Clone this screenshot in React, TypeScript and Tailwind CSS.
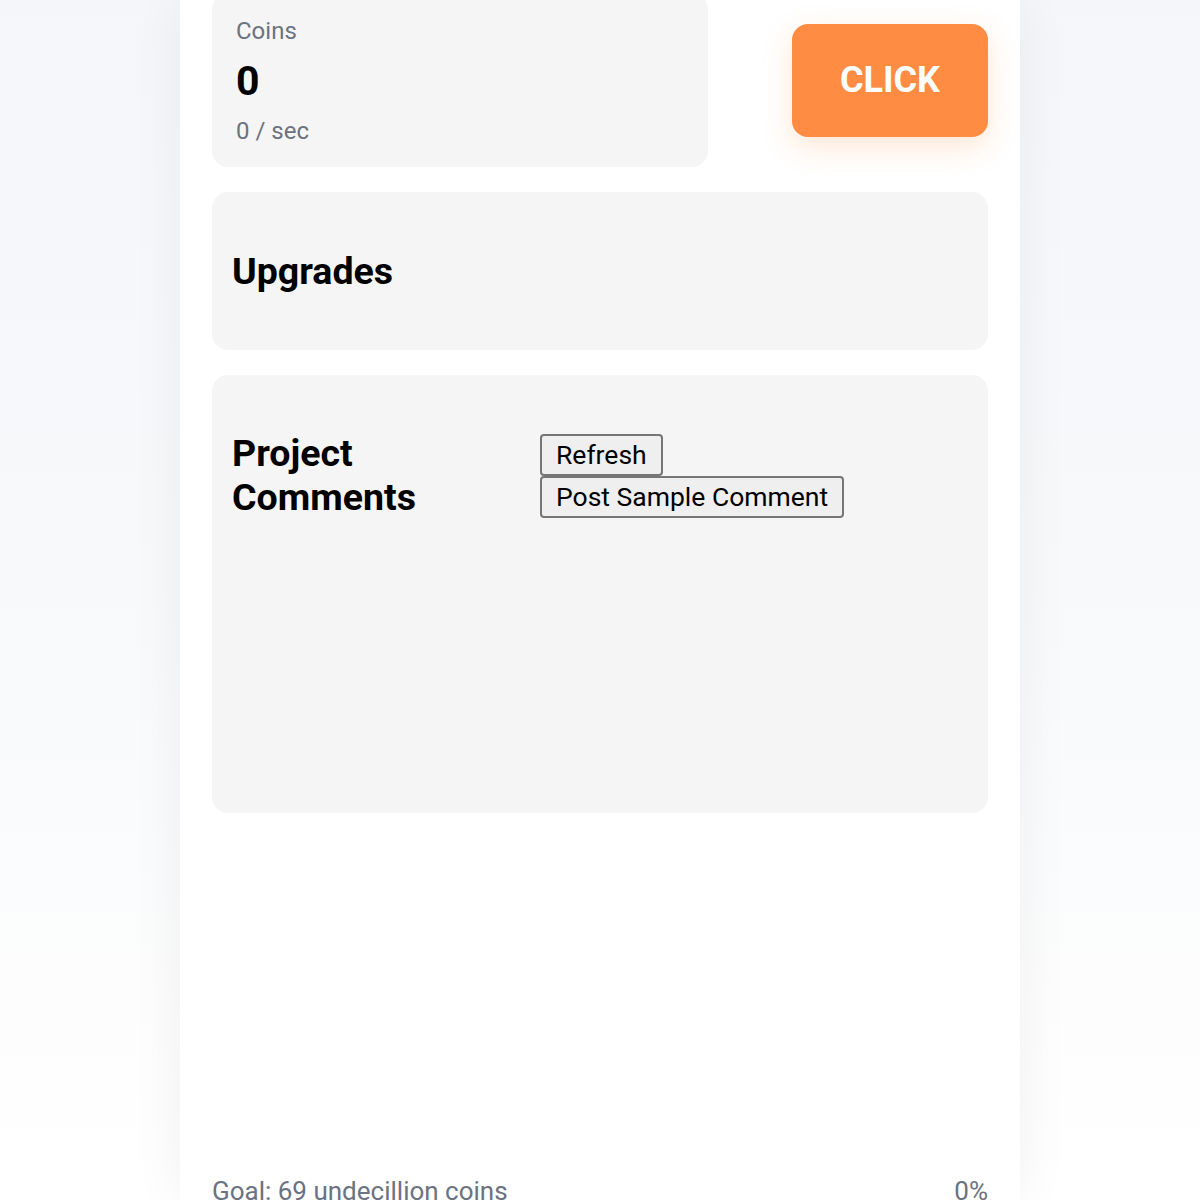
export default function App() {
  return (
    <div className="h-[1200px] overflow-hidden bg-gradient-to-b from-[#f4f6f9] via-[#f8f9fb] to-white flex justify-center font-['Roboto',sans-serif]">
      <div className="w-[840px] shrink-0 bg-white shadow-[0_0_50px_rgba(15,23,42,0.06)] px-8 flex flex-col">
        <div className="-mt-[7px] shrink-0 flex items-center gap-[84px]">
          <div className="flex-1 bg-[#f5f5f5] rounded-2xl px-6 pt-6 pb-[22px]">
            <div className="text-[24px] leading-[28px] text-[#6b7280]">Coins</div>
            <div className="text-[41px] leading-[48px] font-bold text-black mt-3">0</div>
            <div className="text-[24px] leading-[28px] text-[#6b7280] mt-3">0 / sec</div>
          </div>
          <button className="w-[196px] h-[113px] shrink-0 rounded-2xl bg-[#ff8c42] text-white font-bold text-[36px] shadow-[0_10px_30px_rgba(255,140,66,0.22)]">
            CLICK
          </button>
        </div>

        <div className="mt-[25px] h-[158px] shrink-0 bg-[#f5f5f5] rounded-2xl px-5 flex items-center">
          <h2 className="text-[37.5px] leading-[44px] font-bold text-black">Upgrades</h2>
        </div>

        <div className="mt-[25px] h-[438px] shrink-0 bg-[#f5f5f5] rounded-2xl px-5 pt-[56px]">
          <div className="flex items-start">
            <h2 className="w-[308px] text-[37.5px] leading-[44px] font-bold text-black">
              Project
              <br />
              Comments
            </h2>
            <div className="flex flex-col items-start mt-[3px]">
              <button className="h-[42px] px-[14px] text-[26.5px] leading-none text-black bg-[#efefef] border-2 border-[#767676] rounded-[4px]">
                Refresh
              </button>
              <button className="h-[42px] px-[14px] text-[26.5px] leading-none text-black bg-[#efefef] border-2 border-[#767676] rounded-[4px]">
                Post Sample Comment
              </button>
            </div>
          </div>
        </div>

        <div className="mt-[362px] shrink-0 flex justify-between text-[26px] leading-[32px] text-[#6b7280]">
          <span>Goal: 69 undecillion coins</span>
          <span>0%</span>
        </div>
      </div>
    </div>
  );
}
